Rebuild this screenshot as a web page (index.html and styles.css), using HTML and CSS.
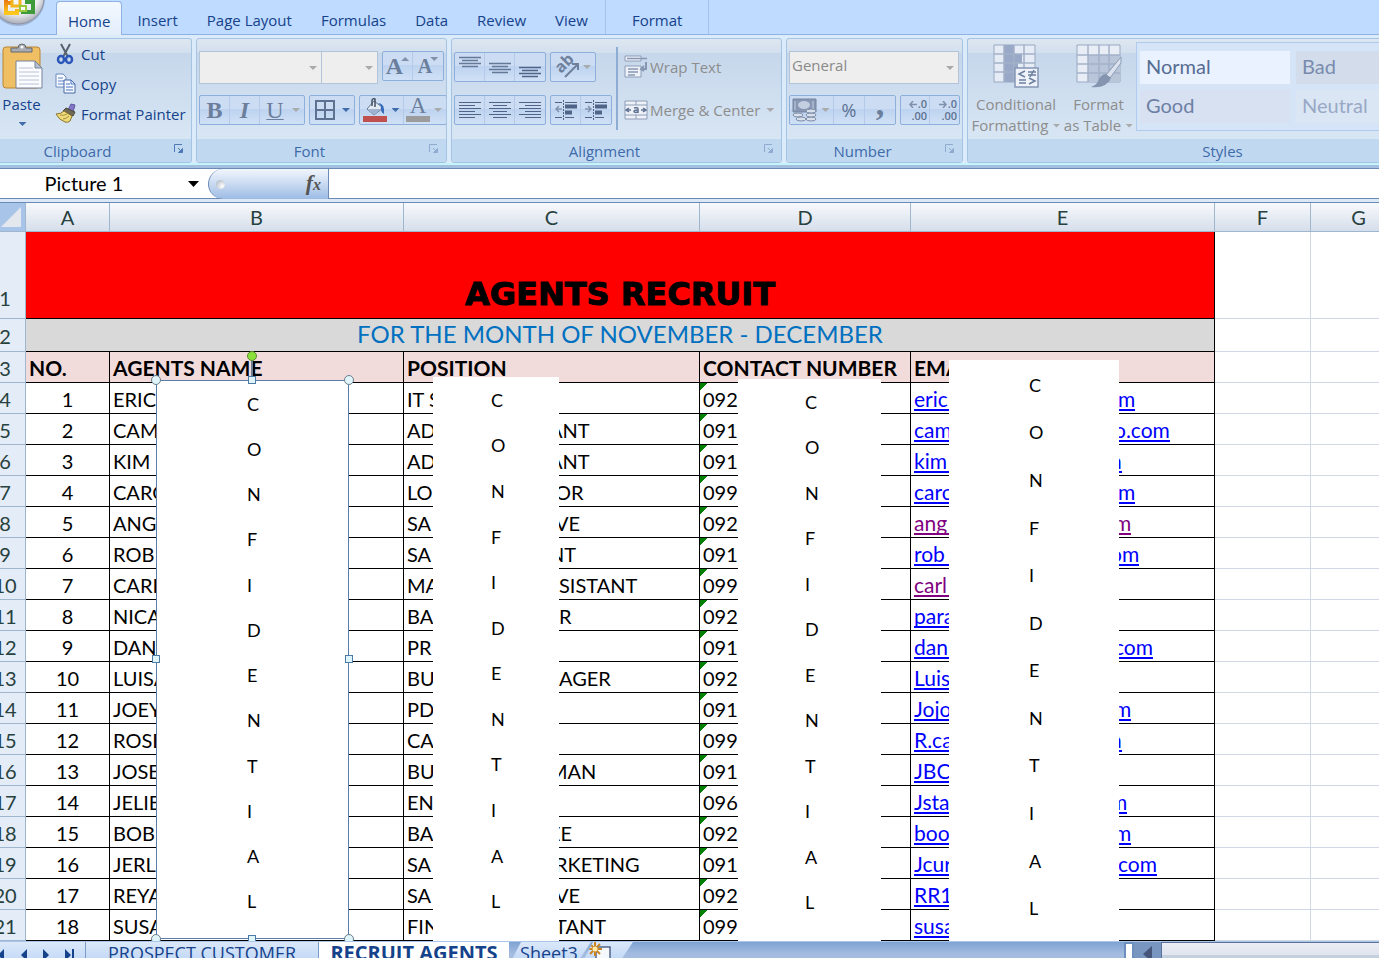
FILE: index.html
```html
<!DOCTYPE html>
<html lang="en">
<head>
<meta charset="utf-8">
<title>Agents Recruit</title>
<link rel="stylesheet" href="styles.css">
</head>
<body>
<header class="tabs">
  <button class="office" aria-label="Office menu">
    <svg width="50" height="28" viewBox="0 0 50 28">
      <defs>
        <radialGradient id="orb" cx=".5" cy=".4" r=".6"><stop offset="0" stop-color="#fff"/><stop offset=".7" stop-color="#e9eaee"/><stop offset="1" stop-color="#a9adb8"/></radialGradient>
        <linearGradient id="or" x2="0" y2="1"><stop stop-color="#e8780c"/><stop offset="1" stop-color="#ffc81e"/></linearGradient>
        <symbol id="launcher" viewBox="0 0 10 10"><path d="M.5 8V.5H8" fill="none" stroke="currentColor"/><path d="M4 4l4 4M8.500 4.500v4h-4z" fill="currentColor" stroke="currentColor"/></symbol>
      </defs>
      <circle cx="18" cy="-1" r="27" fill="#7d8fae" opacity=".5"/>
      <circle cx="18" cy="-2" r="26" fill="url(#orb)" stroke="#8b93a5"/>
      <path d="M6 0v13h11V9M6 3h6" fill="none" stroke="url(#or)" stroke-width="4"/>
      <path d="M12-2v8h8v-8" fill="none" stroke="#f2b51c" stroke-width="3"/>
      <path d="M23 6v6h10V2h-8" fill="none" stroke="#3e9a3b" stroke-width="4"/>
      <path d="M20 6h6v5h-6z" fill="#fff" stroke="#9bc93c" stroke-width="2"/>
    </svg>
  </button>
  <nav class="tablist">
    <button class="tab active">Home</button>
    <button class="tab">Insert</button>
    <button class="tab">Page Layout</button>
    <button class="tab">Formulas</button>
    <button class="tab">Data</button>
    <button class="tab">Review</button>
    <button class="tab">View</button>
    <button class="tab context">Format</button>
  </nav>
</header>

<section class="ribbon">
  <section class="group clipboard">
    <div class="body">
      <button class="paste">
        <svg width="42" height="48" viewBox="0 0 42 48">
          <rect x="2" y="4" width="37" height="41" rx="3" fill="#f0bf63" stroke="#b98535"/>
          <path d="M10 9V5h7q0-4 4-4t4 4h6v4z" fill="#a9adb3" stroke="#63676e"/>
          <circle cx="21" cy="4" r="1.500" fill="#fff"/>
          <path d="M15 18h19l7 7v20H15z" fill="#fbfcff" stroke="#76839a"/>
          <path d="M34 18v7h7z" fill="#b4bfd2" stroke="#76839a"/>
          <path d="M18 25h14M18 29h20M18 33h20M18 37h20M18 41h20" stroke="#b9c2d3"/>
        </svg>
        <span>Paste</span>
        <i class="caret on"></i>
      </button>
      <div class="stack">
        <button class="line">
          <svg width="22" height="22" viewBox="0 0 22 22"><path d="M6 1l7 13M15 1L8 14" stroke="#59616e" stroke-width="2"/><ellipse cx="6" cy="16.500" rx="3" ry="3.500" fill="none" stroke="#2c56b8" stroke-width="2.500"/><ellipse cx="14" cy="16.500" rx="3" ry="3.500" fill="none" stroke="#2c56b8" stroke-width="2.500"/></svg>
          Cut</button>
        <button class="line">
          <svg width="22" height="22" viewBox="0 0 22 22"><path d="M1 1h7l3 3v10H1z" fill="#f6f9ff" stroke="#6d89bd"/><path d="M3 5h5M3 8h6M3 11h6" stroke="#5f84c6"/><path d="M9 7h7l4 4v9H9z" fill="#f6f9ff" stroke="#4468a8"/><path d="M16 7v4h4M11 11h4M11 14h7M11 17h7" fill="none" stroke="#4772c0"/></svg>
          Copy</button>
        <button class="line">
          <svg width="22" height="22" viewBox="0 0 22 22"><path d="M13 7l3-6 4 1-2 7z" fill="#8176c8" stroke="#5b559c"/><path d="M11 5l9 4-2 4-10-5z" fill="#6f6a55" stroke="#4b473a"/><path d="M9 8l8 5-2 5q-2 2-5 1-6-2-9-8 5 0 8-3z" fill="#eedc7c" stroke="#8b7228"/><path d="M5 12q4 1 7-1M8 16q3 0 6-3" fill="none" stroke="#a98d36"/></svg>
          Format Painter</button>
      </div>
    </div>
    <h2>Clipboard</h2><button class="launch on" aria-label="Clipboard options"><svg width="10" height="10"><use href="#launcher"/></svg></button>
  </section>

  <section class="group font">
    <div class="body rows">
      <div class="row">
        <span class="combo face"><select aria-label="Font"><option></option></select></span>
        <span class="combo size"><select aria-label="Font size"><option></option></select></span>
        <span class="cluster"><button class="serif big" aria-label="Grow font">A<i class="caret up"></i></button><button class="serif" aria-label="Shrink font">A<i class="caret raised"></i></button></span>
      </div>
      <div class="row">
        <span class="cluster"><button class="serif big">B</button><button class="serif big ital">I</button><button class="serif thin under">U</button><button class="drop" aria-label="Underline style"><i class="caret"></i></button></span>
        <span class="cluster"><button aria-label="Borders"><svg width="20" height="20" viewBox="0 0 20 20"><path d="M1 1h18v18H1zM10 1v18M1 10h18" fill="none" stroke="#5d7291" stroke-width="2"/></svg></button><button class="drop" aria-label="Border styles"><i class="caret on"></i></button></span>
        <span class="cluster"><button aria-label="Fill color"><svg width="24" height="24" viewBox="0 0 24 24"><path d="M11 3l9 7-9 7-7-6z" fill="#e4eaf3" stroke="#667a9a"/><path d="M5 11h13l-7 6z" fill="#9fb2cf"/><path d="M9 8V3q0-3 3-2v8" fill="none" stroke="#444e60" stroke-width="1.500"/><path d="M15 5q7 0 6 11-4-2-3-8z" fill="#3569b9"/><path d="M0 18h24v6H0z" fill="#c0504d"/></svg></button><button class="drop" aria-label="Fill colors"><i class="caret on"></i></button><button class="serif thin inked">A</button><button class="drop" aria-label="Font colors"><i class="caret"></i></button></span>
      </div>
    </div>
    <h2>Font</h2><button class="launch" aria-label="Font options"><svg width="10" height="10"><use href="#launcher"/></svg></button>
  </section>

  <section class="group align">
    <div class="body">
      <div class="rows flush">
        <div class="row">
          <span class="cluster"><button aria-label="Top align"><svg width="22" height="24" viewBox="0 0 22 24"><path d="M0 2.500h22M3 5.500h16M0 8.500h22M3 11.500h16" stroke="#647998" stroke-width="1.500"/></svg></button><button aria-label="Middle align"><svg width="22" height="24" viewBox="0 0 22 24"><path d="M0 8.500h22M3 11.500h16M0 14.500h22M3 17.500h16" stroke="#647998" stroke-width="1.500"/></svg></button><button aria-label="Bottom align"><svg width="22" height="24" viewBox="0 0 22 24"><path d="M0 12.500h22M3 15.500h16M0 18.500h22M3 21.500h16" stroke="#4f6487" stroke-width="1.500"/></svg></button></span>
          <span class="cluster"><button aria-label="Orientation"><svg class="loose" width="24" height="24" viewBox="0 0 24 24"><text x="0" y="0" transform="translate(7 19) rotate(-45)" font-family="Open Sans, sans-serif" font-size="16" font-weight="700" fill="#6f809d">ab</text><path d="M11 22L23 10M18 9h6v6" fill="none" stroke="#6f809d" stroke-width="2"/></svg></button><button class="drop" aria-label="Orientations"><i class="caret"></i></button></span>
        </div>
        <div class="row">
          <span class="cluster"><button aria-label="Align left"><svg width="22" height="20" viewBox="0 0 22 20"><path d="M0 2.500h22M0 5.500h16M0 8.500h22M0 11.500h16M0 14.500h22M0 17.500h16" stroke="#4f6487"/></svg></button><button aria-label="Center"><svg width="22" height="20" viewBox="0 0 22 20"><path d="M0 2.500h22M4 5.500h14M0 8.500h22M4 11.500h14M0 14.500h22M4 17.500h14" stroke="#4f6487"/></svg></button><button aria-label="Align right"><svg width="22" height="20" viewBox="0 0 22 20"><path d="M0 2.500h22M6 5.500h16M0 8.500h22M6 11.500h16M0 14.500h22M6 17.500h16" stroke="#4f6487"/></svg></button></span>
          <span class="cluster"><button aria-label="Decrease indent"><svg width="22" height="20" viewBox="0 0 22 20"><path d="M0 2.500h7M10 2.500h12M0 17.500h7M10 17.500h9" stroke="#4f6487"/><path d="M8.500 0v20" stroke="#4f6487" stroke-dasharray="2 1"/><path d="M10 6.500h12M10 12.500h7" stroke="#4f6487" stroke-width="4"/><path d="M7 9H1M4 6L1 9l3 3" fill="none" stroke="#8394ae" stroke-width="1.500"/></svg></button><button aria-label="Increase indent"><svg width="22" height="20" viewBox="0 0 22 20"><path d="M0 2.500h7M10 2.500h12M0 17.500h7M10 17.500h9" stroke="#4f6487"/><path d="M8.500 0v20" stroke="#4f6487" stroke-dasharray="2 1"/><path d="M10 6.500h12M10 12.500h7" stroke="#4f6487" stroke-width="4"/><path d="M0 9h6M3 6l3 3-3 3" fill="none" stroke="#8394ae" stroke-width="1.500"/></svg></button></span>
        </div>
      </div>
      <div class="rows labelled">
        <button class="line dim"><svg width="24" height="24" viewBox="0 0 24 24"><path d="M1 1h16v5H1zM1 11h16v11H1z" fill="#eef2f8" stroke="#8c9cb6"/><path d="M3 3.500h20M4 14h10M4 17h10M4 20h7" stroke="#8797b2" stroke-width="1.500"/><path d="M22 7v7h-4M20 11l-3 3 3 2" fill="none" stroke="#8797b2" stroke-width="2"/></svg>Wrap Text</button>
        <button class="line dim"><svg width="24" height="20" viewBox="0 0 24 20"><path d="M1 1h22v18H1zM12 1v4M12 15v4M1 5h22M1 15h22" fill="#eef2f8" stroke="#8c9cb6"/><path d="M2 10h5M5 8L2 10l3 2M22 10h-5M19 8l3 2-3 2M10 8q4-1 4 1v4M14 10q-4 0-4 1.500t4 .5" fill="none" stroke="#5f7292" stroke-width="1.500"/></svg>Merge &amp; Center<i class="caret"></i></button>
      </div>
    </div>
    <h2>Alignment</h2><button class="launch" aria-label="Alignment options"><svg width="10" height="10"><use href="#launcher"/></svg></button>
  </section>

  <section class="group number">
    <div class="body rows">
      <div class="row"><span class="combo wide"><select aria-label="Number format"><option>General</option></select></span></div>
      <div class="row">
        <span class="cluster"><button aria-label="Accounting format"><svg width="26" height="26" viewBox="0 0 26 26"><path d="M1 2h23v13H1z" fill="#8796b2" stroke="#75869f"/><ellipse cx="12" cy="8" rx="6" ry="4" fill="#c3cfe1"/><path d="M3 4v9M21 4v9" stroke="#c3cfe1"/><g fill="#d8e0ec" stroke="#7c8ca7"><ellipse cx="6" cy="18" rx="5" ry="2"/><ellipse cx="9" cy="22" rx="5" ry="2"/><ellipse cx="19" cy="22" rx="5" ry="2"/><ellipse cx="19" cy="18" rx="5" ry="2"/><ellipse cx="19" cy="14" rx="5" ry="2"/></g></svg></button><button class="drop" aria-label="Currencies"><i class="caret"></i></button><button class="pct">%</button><button class="serif comma" aria-label="Comma style">,</button></span>
        <span class="cluster"><button class="dec" aria-label="Increase decimal"><span><svg width="8" height="7" viewBox="0 0 8 7"><path d="M8 3.500H1M4 0L1 3.500 4 7" fill="none" stroke="#7f90ac" stroke-width="1.500"/></svg>.0</span><span>.00</span></button><button class="dec" aria-label="Decrease decimal"><span><svg width="8" height="7" viewBox="0 0 8 7"><path d="M0 3.500h7M4 0l3 3.500L4 7" fill="none" stroke="#7f90ac" stroke-width="1.500"/></svg>.0</span><span>.00</span></button></span>
      </div>
    </div>
    <h2>Number</h2><button class="launch" aria-label="Number options"><svg width="10" height="10"><use href="#launcher"/></svg></button>
  </section>

  <section class="group styles">
    <div class="body">
      <button class="tall">
        <svg width="46" height="44" viewBox="0 0 46 44"><path d="M1 1h41v37H1z" fill="#e6ecf5" stroke="#98a8c2"/><path d="M11 1h10v9h8v9h-4v19H11z" fill="#98a8c6"/><path d="M11 1v37M21 1v37M31 1v37M1 10h41M1 19h41M1 28h41" stroke="#a3b1c9" stroke-width="1.500"/><path d="M22 24h23v19H22z" fill="#eff3f9" stroke="#8496b4" stroke-width="1.500"/><path d="M32 27l-6 3 6 3M26 36h7M26 39h7M35 28h8M35 31h8M41 26l-4 7M36 34l6 3-6 3" fill="none" stroke="#6b7f9f" stroke-width="1.500"/></svg>
        <span>Conditional</span><span>Formatting<i class="caret"></i></span>
      </button>
      <button class="tall">
        <svg width="46" height="44" viewBox="0 0 46 44"><path d="M1 1h43v37H1z" fill="#e9eef6" stroke="#98a8c2"/><path d="M12 11h32v27H12z" fill="#b9c5d9"/><path d="M12 1v37M23 1v37M33 1v37M1 11h43M1 20h43M1 29h43" stroke="#a3b1c9" stroke-width="1.500"/><path d="M45 13L30 31l4 3 11-15z" fill="#dbe2ed" stroke="#8c9cb5"/><path d="M30 30l5 4q-5 11-20 9 7-3 8-8 3-5 7-5z" fill="#8595b0"/></svg>
        <span>Format</span><span>as Table<i class="caret"></i></span>
      </button>
      <div class="gallery">
        <button class="s-normal">Normal</button><button class="s-bad">Bad</button>
        <button class="s-good">Good</button><button class="s-neutral">Neutral</button>
      </div>
    </div>
    <h2>Styles</h2>
  </section>
</section>

<section class="formula">
  <input class="name" aria-label="Name box" value="Picture 1">
  <button class="namedrop" aria-label="Names"><i class="caret black"></i></button>
  <button class="fx" aria-label="Insert function"><i class="dot"></i><span>f<small>x</small></span></button>
  <input class="entry" aria-label="Formula">
</section>

<main class="sheet">
<table>
  <colgroup><col class="c-head"><col class="c-a"><col class="c-b"><col class="c-c"><col class="c-d"><col class="c-e"><col class="c-f"><col class="c-f"></colgroup>
  <thead><tr class="letters"><th class="corner"><i></i></th><th>A</th><th>B</th><th>C</th><th>D</th><th>E</th><th>F</th><th>G</th></tr></thead>
  <tbody>
  <tr class="title"><th>1</th><td colspan="5">AGENTS RECRUIT</td><td></td><td></td></tr>
  <tr class="month"><th>2</th><td colspan="5">FOR THE MONTH OF NOVEMBER - DECEMBER</td><td></td><td></td></tr>
  <tr class="fields"><th>3</th><td>NO.</td><td>AGENTS NAME</td><td>POSITION</td><td>CONTACT NUMBER</td><td>EMAIL</td><td></td><td></td></tr>
  <tr><th>4</th><td>1</td><td>ERIC</td><td><span class="head">IT S</span></td><td>092</td><td><a href="#r4"><span class="head">eric</span><span>m</span></a></td><td></td><td></td></tr>
  <tr><th>5</th><td>2</td><td>CAM</td><td><span class="head">AD</span><span class="cut">ANT</span></td><td>091</td><td><a href="#r5"><span class="head">cam</span><span class="nick">o.com</span></a></td><td></td><td></td></tr>
  <tr><th>6</th><td>3</td><td>KIM</td><td><span class="head">AD</span><span class="cut">ANT</span></td><td>091</td><td><a href="#r6"><span class="head">kim</span><span class="cut">n</span></a></td><td></td><td></td></tr>
  <tr><th>7</th><td>4</td><td>CARO</td><td><span class="head">LO</span><span class="nick">OR</span></td><td>099</td><td><a href="#r7"><span class="head">caro</span><span>m</span></a></td><td></td><td></td></tr>
  <tr><th>8</th><td>5</td><td>ANG</td><td><span class="head">SA</span><span class="nick">VE</span></td><td>092</td><td><a class="seen" href="#r8"><span class="head">ang</span><span class="nick">m</span></a></td><td></td><td></td></tr>
  <tr><th>9</th><td>6</td><td>ROB</td><td><span class="head">SA</span><span class="cut">NT</span></td><td>091</td><td><a href="#r9"><span class="head">rob</span><span class="cut">om</span></a></td><td></td><td></td></tr>
  <tr><th>10</th><td>7</td><td>CARL</td><td><span class="head">MA</span><span>SISTANT</span></td><td>099</td><td><a class="seen" href="#r10">carl</a></td><td></td><td></td></tr>
  <tr><th>11</th><td>8</td><td>NICA</td><td><span class="head">BA</span><span>R</span></td><td>092</td><td><a href="#r11">para</a></td><td></td><td></td></tr>
  <tr><th>12</th><td>9</td><td>DAN</td><td><span class="head">PR</span></td><td>091</td><td><a href="#r12"><span class="head">dan</span><span class="nick">com</span></a></td><td></td><td></td></tr>
  <tr><th>13</th><td>10</td><td>LUISA</td><td><span class="head">BU</span><span>AGER</span></td><td>092</td><td><a href="#r13">Luis</a></td><td></td><td></td></tr>
  <tr><th>14</th><td>11</td><td>JOEY</td><td><span class="head">PD</span></td><td>091</td><td><a href="#r14"><span class="head">Jojo</span><span class="nick">m</span></a></td><td></td><td></td></tr>
  <tr><th>15</th><td>12</td><td>ROSE</td><td><span class="head">CA</span></td><td>099</td><td><a href="#r15"><span class="head">R.ca</span><span class="cut">n</span></a></td><td></td><td></td></tr>
  <tr><th>16</th><td>13</td><td>JOSE</td><td><span class="head">BU</span><span class="cut">MAN</span></td><td>091</td><td><a href="#r16">JBC</a></td><td></td><td></td></tr>
  <tr><th>17</th><td>14</td><td>JELIE</td><td><span class="head">EN</span></td><td>096</td><td><a href="#r17"><span class="head">Jsta</span><span class="cut">m</span></a></td><td></td><td></td></tr>
  <tr><th>18</th><td>15</td><td>BOB</td><td><span class="head">BA</span><span class="cut">EE</span></td><td>092</td><td><a href="#r18"><span class="head">boo</span><span class="nick">m</span></a></td><td></td><td></td></tr>
  <tr><th>19</th><td>16</td><td>JERL</td><td><span class="head">SA</span><span class="nick">RKETING</span></td><td>091</td><td><a href="#r19"><span class="head">Jcur</span><span>com</span></a></td><td></td><td></td></tr>
  <tr><th>20</th><td>17</td><td>REYA</td><td><span class="head">SA</span><span class="nick">VE</span></td><td>092</td><td><a href="#r20">RR1</a></td><td></td><td></td></tr>
  <tr><th>21</th><td>18</td><td>SUSA</td><td><span class="head">FIN</span><span class="nick">TANT</span></td><td>099</td><td><a href="#r21">susa</a></td><td></td><td></td></tr>
  </tbody>
</table>

<div class="cover over-b"><span>C</span><span>O</span><span>N</span><span>F</span><span>I</span><span>D</span><span>E</span><span>N</span><span>T</span><span>I</span><span>A</span><span>L</span>
  <i class="stem"></i><i class="grip rot"></i><i class="grip tl"></i><i class="grip tr"></i><i class="grip bl"></i><i class="grip br"></i><i class="grip sq tm"></i><i class="grip sq bm"></i><i class="grip sq ml"></i><i class="grip sq mr"></i></div>
<div class="cover over-c"><span>C</span><span>O</span><span>N</span><span>F</span><span>I</span><span>D</span><span>E</span><span>N</span><span>T</span><span>I</span><span>A</span><span>L</span></div>
<div class="cover over-d"><span>C</span><span>O</span><span>N</span><span>F</span><span>I</span><span>D</span><span>E</span><span>N</span><span>T</span><span>I</span><span>A</span><span>L</span></div>
<div class="cover over-e"><span>C</span><span>O</span><span>N</span><span>F</span><span>I</span><span>D</span><span>E</span><span>N</span><span>T</span><span>I</span><span>A</span><span>L</span></div>
</main>

<footer class="sheets">
  <div class="steps">
    <button aria-label="First sheet"><svg width="10" height="12" viewBox="0 0 10 12"><path d="M4 0v12L-2 6z" fill="#15428b"/></svg></button>
    <button aria-label="Previous sheet"><svg width="10" height="12" viewBox="0 0 10 12"><path d="M6 0v12L0 6z" fill="#15428b"/></svg></button>
    <button aria-label="Next sheet"><svg width="10" height="12" viewBox="0 0 10 12"><path d="M0 0v12l6-6z" fill="#15428b"/></svg></button>
    <button aria-label="Last sheet"><svg width="10" height="12" viewBox="0 0 10 12"><path d="M1 0v12l6-6zM8 0h2v12H8z" fill="#15428b"/></svg></button>
  </div>
  <button class="leaf first">PROSPECT CUSTOMER</button>
  <button class="leaf current">RECRUIT AGENTS</button>
  <button class="leaf slant">Sheet3</button>
  <button class="leaf slant new" aria-label="Insert sheet"><svg width="24" height="20" viewBox="0 0 24 20"><path d="M8 5h14v13H8z" fill="#f5f8fd" stroke="#51658c" stroke-width="1.500"/><path d="M7 0v14M0 7h14M2 2l10 10M12 2L2 12" stroke="#c98524" stroke-width="2"/><circle cx="7" cy="7" r="2.500" fill="#ffe9a8"/></svg></button>
  <span class="fill"></span>
  <span class="split"></span>
  <button class="scroll" aria-label="Scroll left"><svg width="9" height="16" viewBox="0 0 9 16"><path d="M9 0v16L0 8z" fill="#46557a"/></svg></button>
  <span class="track"></span>
</footer>
</body>
</html>
```
FILE: styles.css
```css
* { box-sizing: border-box; }
body {
  margin: 0;
  height: 100vh;
  overflow: hidden;
  background: #fff;
  font: 15px/20px "Open Sans", "Noto Sans", sans-serif;
  color: #15428b;
}
button, input, select { font: inherit; color: inherit; border: 0; padding: 0; margin: 0; background: none; border-radius: 0; }
svg { display: block; flex: none; overflow: hidden; }
.loose { overflow: visible; }

.caret { flex: none; width: 8px; height: 4px; background: #a9aaac; clip-path: polygon(0 0, 100% 0, 50% 100%); }
.caret.on { background: #416cab; }
.caret.up { clip-path: polygon(50% 0, 100% 100%, 0 100%); }
.caret.up, .caret.raised { align-self: flex-start; margin: 5px 0 0 -2px; background: #8291ab; }
.caret.black { width: 11px; height: 6px; background: #000; }

/* Tab strip */
.tabs { display: flex; height: 35px; background: #bfdbff; border-bottom: 1px solid #8db2e3; }
.office { flex: none; width: 54px; align-self: flex-start; }
.tablist { display: flex; align-items: flex-end; }
.tab { height: 34px; padding: 5px 15px 0 14px; }
.tab.active { height: 34px; margin: 0 1px -1px 2px; padding: 4px 11px 0; border: 1px solid #8db2e3; border-bottom: 0; border-radius: 4px 4px 0 0; background: linear-gradient(#f3f8fe, #e3eefb); }
.tab.context { margin-left: 2px; padding: 5px 26px 0; border: solid #a3c3ec; border-width: 0 1px; }

/* Ribbon */
.ribbon { display: flex; gap: 4px; height: 133px; padding: 3px 0 2px; background: #dcebf9; border-bottom: 3px solid #a3bfdf; box-shadow: inset 0 -2px #c5f4fb; }
.group { position: relative; flex: none; display: flex; flex-direction: column; border: 1px solid #a5c3e2; border-radius: 3px; background: linear-gradient(#dde7f1, #d2dfed 14px, #c6d7eb 14px, #d8e6f4 100px); overflow: hidden; }
.group h2 { flex: none; margin: 0; height: 23px; padding-right: 24px; background: #c1d9f0; font-size: 15px; font-weight: 400; line-height: 24px; color: #3e6aaa; text-align: center; }
.group .body { display: flex; flex: 1; min-height: 0; }
.clipboard { width: 192px; border-left: 0; border-radius: 0 3px 3px 0; }
.clipboard h2 { padding-right: 36px; }
.font { width: 251px; }
.align { width: 331px; }
.number { width: 177px; }
.styles { flex: 1; min-width: 412px; border-right: 0; border-radius: 3px 0 0 3px; }
.styles h2 { padding-right: 0; padding-left: 98px; }
.launch { position: absolute; right: 7px; bottom: 8px; color: #8fabd0; }
.launch.on { color: #4e79b5; }
.paste { width: 45px; padding-top: 4px; display: flex; flex-direction: column; align-items: center; }
.paste span { margin: 3px 2px 8px 0; }
.paste svg { margin-left: -2px; }
.stack { display: flex; flex-direction: column; padding: 0 0 0 10px; }
.line { display: flex; align-items: center; gap: 4px; height: 30px; white-space: nowrap; }
.dim { color: #8d8d8d; gap: 2px; }

.body.rows { flex-direction: column; }
.rows { display: flex; flex-direction: column; gap: 12px; padding: 12px 0 0 2px; }
.row { display: flex; gap: 4px; height: 32px; align-items: flex-start; }
.flush { gap: 11px; padding-top: 13px; }
.labelled { margin: 8px 0 9px 4px; padding: 5px 0 0 6px; border-left: 2px solid #8eadd4; gap: 13px; }
.labelled .caret { margin-left: 4px; }
.combo { position: relative; display: flex; height: 33px; border: 1px solid #b3c4d9; background: #eee; color: #8a8a8a; }
.combo select { appearance: none; width: 100%; padding: 0 0 5px 2px; }
.combo::after { content: ""; position: absolute; right: 4px; top: 14px; width: 8px; height: 4px; background: #aaa; clip-path: polygon(0 0, 100% 0, 50% 100%); }
.face { width: 123px; }
.size { width: 57px; margin-left: -5px; }
.wide { width: 170px; }
.cluster { display: flex; height: 30px; border: 1px solid #8eaedb; border-radius: 2px; background: linear-gradient(#cbdcf3 45%, #bcd2ef 45%, #d0e1f6); color: #5d7291; }
.cluster button { display: flex; align-items: center; justify-content: center; width: 30px; border-right: 1px solid #b3caea; }
.cluster button:last-child { border-right: 0; }
.cluster .drop { width: 14px; padding-right: 2px; }
.cluster button:has(+ .drop) { border-right: 0; }
.cluster .serif { font: bold 20px/28px "Liberation Serif", serif; color: #6b7e9c; }
.cluster .big { font-size: 24px; }
.cluster .ital { font-style: italic; }
.cluster .thin { font-weight: 400; font-size: 24px; }
.under { text-decoration: underline; text-decoration-thickness: 1px; }
.cluster .inked { font-size: 23px; line-height: 20px; border-bottom: 6px solid #9c9c9c; margin: 0 2px 2px; width: 24px; }
.cluster .comma { font-size: 34px; line-height: 1px; padding-bottom: 14px; }
.cluster .pct { font-size: 18px; width: 31px; }
.cluster .dec { width: 29px; flex-direction: column; align-items: flex-end; padding-right: 2px; font: 600 11px/12px "Open Sans", sans-serif; }
.dec span { display: flex; align-items: center; gap: 1px; }
.styles .body { gap: 3px; padding-left: 3px; }
.tall { display: flex; flex-direction: column; align-items: center; padding-top: 5px; width: 90px; color: #8d8d8d; line-height: 21px; }
.tall + .tall { width: 69px; }
.tall svg { margin-bottom: 6px; }
.tall span { display: flex; align-items: center; gap: 4px; white-space: nowrap; }
.gallery { flex: 1; display: grid; grid-template: 33px 33px / 150px 1fr; gap: 6px; margin: 3px 0 8px; padding: 8px 0 8px 3px; border: 1px solid #afcbee; border-right: 0; background: #d5e5f7; font: 20px/24px Lato, sans-serif; }
.gallery button { text-align: left; padding: 0 0 3px 6px; color: #6d7fa3; }
.gallery .s-normal { background: #eaf2ff; color: #566c92; }
.gallery .s-bad { background: #d2dcea; color: #7a8bae; }
.gallery .s-good { background: #d7e1f1; }
.gallery .s-neutral { background: #dbe6f4; color: #98a8c6; }

/* Formula bar */
.formula { display: flex; height: 34px; border-top: 1px solid #6a8bb5; border-bottom: 3px solid #dce8f7; box-shadow: inset 0 -1px #6a8bb5; font: 20px/28px Lato, sans-serif; color: #000; }
.name { width: 168px; padding-bottom: 2px; text-align: center; }
.namedrop { width: 40px; display: flex; align-items: center; padding-left: 20px; }
.fx { width: 121px; height: 30px; display: flex; align-items: center; justify-content: space-between; padding: 0 7px; border: solid #6a8bb5; border-width: 0 1px; border-radius: 15px 0 0 15px; background: linear-gradient(#f1f6fd, #c9daf1 50%, #9dbbe4); font: italic bold 22px/26px "Liberation Serif", serif; color: #555; }
.fx small { font-size: 16px; }
.dot { width: 9px; height: 9px; border-radius: 50%; background: radial-gradient(circle at 70% 70%, #fff, #a6aebd); }
.entry { flex: 1; min-width: 0; }

/* Sheet */
.sheet { position: relative; overflow: hidden; border-top: 1px solid #6a8bb5; font: 20px/24px Lato, sans-serif; color: #000; }
table { width: calc(100% + 42px); margin-left: -15px; table-layout: fixed; border-collapse: separate; border-spacing: 0; }
.c-head { width: 41px; }
.c-a { width: 84px; }
.c-b { width: 294px; }
.c-c { width: 296px; }
.c-d { width: 211px; }
.c-e { width: 304px; }
.c-f { width: 96px; }
th, td { height: 31px; padding: 1px 3px 0; font-weight: 400; text-align: left; white-space: nowrap; overflow: hidden; border: solid #000; border-width: 0 1px 1px 0; }
tbody tr { height: 31px; }
td:nth-last-child(-n+2) { border-color: #d0d7e5; }
td:nth-child(2) { text-align: center; }
th { text-align: center; padding: 1px 0 0; background: #e4ecf7; border-color: #9eb6ce; color: #27413e; }
.letters th { height: 29px; padding: 0; background: linear-gradient(#f7f9fc, #d6deeb); }
.letters .corner { background: #a9c4e9; padding: 4px 4px 4px 16px; }
.corner i { display: block; width: 20px; height: 20px; background: #e3e7ee; clip-path: polygon(100% 0, 100% 100%, 0 100%); }
.title td, .title th { height: 87px; vertical-align: bottom; padding-bottom: 8px; }
.title td[colspan] { padding-bottom: 6px; background: #f00; font: 700 32px/36px "DejaVu Sans", sans-serif; -webkit-text-stroke: 1px #000; }
.month td, .month th { height: 33px; }
.month td[colspan] { background: #d9d9d9; color: #0070c0; font-size: 24px; line-height: 28px; padding: 0 0 3px; }
.fields td { font-weight: 700; font-size: 21px; }
.fields td:nth-child(2) { text-align: left; }
.fields td:nth-child(-n+6) { background: #f2dcdb; }
tr:nth-child(n+4) td:nth-child(5) { background: linear-gradient(135deg, #008000 5px, transparent 5px); }
td .head { display: inline-block; width: 152px; }
td a .head { width: 204px; }
td a { display: inline-flex; min-width: 60px; height: 25px; line-height: 26px; border-bottom: 2px solid #00f; color: #00f; font-size: 21px; text-decoration: none; vertical-align: bottom; }
td a.seen { color: #800080; border-color: #800080; }
.nick { margin-left: -4px; }
.cut { margin-left: -10px; }
a .cut { margin-left: -8px; }

/* Pictures lying over the columns */
.cover { position: absolute; bottom: 0; display: grid; grid-auto-rows: 1fr; align-items: center; background: #fff; font-size: 18px; line-height: 24px; }
.over-b { left: 156px; width: 193px; top: 177px; bottom: 2px; padding: 0 0 14px 90px; border: 1px solid #5a7ca8; }
.over-c { left: 433px; width: 126px; top: 174px; padding: 0 0 17px 58px; }
.over-d { left: 738px; width: 143px; top: 176px; padding: 0 0 16px 67px; }
.over-e { left: 949px; width: 170px; top: 157px; padding: 1px 0 9px 80px; }
.grip { position: absolute; width: 10px; height: 10px; border: 1px solid #6b7d8c; border-radius: 50%; background: #dff5f9; }
.sq { width: 8px; height: 8px; border-radius: 0; border-color: #4d7aa5; }
.tl { left: -6px; top: -6px; }
.tr { right: -6px; top: -6px; }
.bl { left: -6px; bottom: -6px; }
.br { right: -6px; bottom: -6px; }
.tm { left: 91px; top: -5px; }
.bm { left: 91px; bottom: -5px; }
.ml { left: -5px; top: 274px; }
.mr { right: -5px; top: 274px; }
.rot { left: 90px; top: -30px; background: #8ce03c; border-color: #5a8a2c; }
.stem { position: absolute; left: 94px; top: -22px; width: 2px; height: 20px; background: #6f7d92; }

/* Sheet tabs */
.sheets { display: flex; height: 28px; background: linear-gradient(#7fa3d3, #a4bce0 12px); font: 18px/24px "Open Sans", sans-serif; border-top: 1px solid #a9c5e8; }
.steps { display: flex; justify-content: space-between; width: 85px; background: linear-gradient(#dbe8f9, #b8d3f7); }
.steps button { width: 23px; padding: 7px 0 0; display: flex; align-items: flex-start; }
.leaf { background: linear-gradient(#dbe8f9, #b4d0f6); border-left: 1px solid #7b9cc9; line-height: 20px; padding: 0 0 5px; }
.first { width: 233px; }
.current { width: 191px; background: #fff; font-weight: 700; font-size: 20px; }
.slant { width: 84px; border: 0; clip-path: polygon(14px 0, 100% 0, calc(100% - 18px) 100%, 0 100%); margin-left: -2px; }
.new { width: 54px; margin-left: -12px; padding: 0 0 7px 9px; }
.fill { flex: 1; }
.split { width: 10px; border: 2px solid #6d8fbd; border-bottom: 0; background: #fff; }
.scroll { width: 27px; padding: 4px 0 0 9px; display: flex; background: #7896c0; }
.track { width: 218px; background: linear-gradient(#eceef4, #dfe4ee 12px, #c5d0df 12px); border: solid #5c719b; border-width: 1px 0 0 1px; }
```
